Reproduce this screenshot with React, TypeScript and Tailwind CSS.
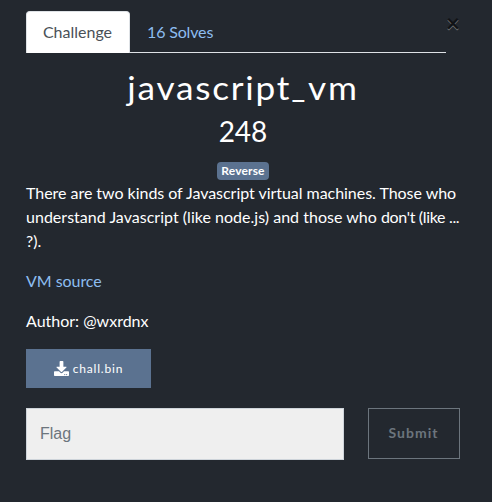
import { FaDownload } from "react-icons/fa";

export default function App() {
  return (
    <main className="h-[502px] w-[492px] overflow-hidden bg-[#23282f] pl-[26px] pr-8 pt-[11px] font-['Lato',sans-serif] text-base leading-6 text-white">
      <div className="flex items-start">
        <nav className="flex h-[42px] w-[420px] shrink-0 border-b border-[#dee2e6]">
          <button className="h-[42px] w-[104px] shrink-0 rounded-t border border-b-0 border-[#dee2e6] bg-white pb-[2px] pr-px text-[#495057]">Challenge</button>
          <button className="ml-[17px] h-[42px] tracking-[-0.15px] text-[#8dbdf0]">16 Solves</button>
        </nav>
        <button className="w-[14px] shrink-0 text-center font-['Lato',sans-serif] text-2xl font-bold leading-6 text-[#111316] [text-shadow:0_1px_0_#777]">×</button>
      </div>
      <h2 className="mt-[16px] h-[38px] scale-x-[1.1] whitespace-nowrap text-center text-[32px] leading-[38px] tracking-[1.6px]">javascript<span className="inline-block origin-left -translate-y-[3px] scale-x-[0.85]">_</span><span className="-ml-px">vm</span></h2>
      <h3 className="mt-[7px] text-center text-[28px] leading-[34px]">248</h3>
      <div className="mt-[14px] flex justify-center">
        <span className="h-[18px] w-[52px] rounded bg-[#5b7290] text-center text-xs font-bold leading-[18px] tracking-[0.15px]">Reverse</span>
      </div>
      <p className="mt-[1px] whitespace-nowrap"><span className="tracking-[-0.035px]">There are two kinds of Javascript virtual machines. Those who</span><br /><span className="tracking-[0.02px]">understand Javascript (like node.js) and those who </span><span className="tracking-[-0.33px]">don't (like ...</span><br />?).</p>
      <p className="mt-4 tracking-[-0.05px]"><a className="text-[#8dbdf0]">VM source</a></p>
      <p className="mt-4">Author: @wxrdnx</p>
      <button className="mt-4 flex h-[39px] w-[125px] items-center justify-center gap-1 bg-[#5b7290] text-xs tracking-[0.8px]">
        <FaDownload size={15} className="-mt-px" /><span>chall.bin</span>
      </button>
      <div className="mt-5 flex justify-between">
        <input placeholder="Flag" className="h-[52px] w-[318px] border border-[#ced4da] bg-[#efefef] px-[13px] font-['Liberation_Sans',sans-serif] text-base placeholder:text-[#6c757d]" />
        <button className="h-[51px] w-[92px] border border-[#6c757d] pb-px pr-px text-sm font-bold tracking-[1px] text-[#6c757d]">Submit</button>
      </div>
    </main>
  );
}
